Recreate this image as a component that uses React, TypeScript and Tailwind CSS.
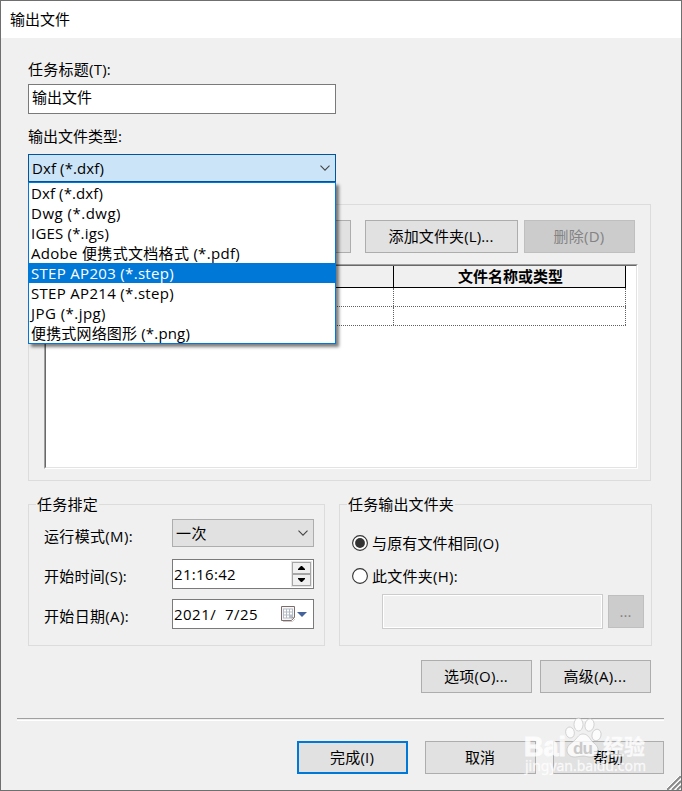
import React, { useState } from "react";
import clsx from "clsx";

const FILE_TYPES = [
  { label: "Dxf (*.dxf)", width: 72 },
  { label: "Dwg (*.dwg)", width: 90 },
  { label: "IGES (*.igs)", width: 78 },
  { label: "Adobe 便携式文档格式 (*.pdf)", width: 209 },
  { label: "STEP AP203 (*.step)", width: 143 },
  { label: "STEP AP214 (*.step)", width: 143 },
  { label: "JPG (*.jpg)", width: 75 },
  { label: "便携式网络图形 (*.png)", width: 159 },
];

interface FitTextProps {
  children: string;
  width: number;
}

const FitText: React.FC<FitTextProps> = ({ children, width }) => {
  const fit = (el: HTMLSpanElement | null) => {
    if (!el) return;
    el.style.letterSpacing = "0px";
    const natural = el.getBoundingClientRect().width;
    el.style.letterSpacing = `${(width - natural) / children.length}px`;
  };
  return (
    <span ref={fit} className="inline-block whitespace-pre">
      {children}
    </span>
  );
};

interface ButtonProps {
  label?: string;
  textWidth?: number;
  className?: string;
  disabled?: boolean;
  primary?: boolean;
}

const Button: React.FC<ButtonProps> = ({ label, textWidth = 0, className, disabled, primary }) => (
  <button
    disabled={disabled}
    className={clsx(
      "flex h-[33px] shrink-0 items-center justify-center pb-0.5 pr-px",
      primary && "border-2 border-[#0078d7] bg-[#e1e1e1]",
      disabled && "border border-[#bfbfbf] bg-[#cccccc] text-[#838383]",
      !primary && !disabled && "border border-[#adadad] bg-[#e1e1e1]",
      className ?? "w-[111px]"
    )}
  >
    {label && <FitText width={textWidth}>{label}</FitText>}
  </button>
);

const Chevron = () => (
  <svg width="10" height="6" viewBox="0 0 10 6" fill="none" stroke="#444" strokeWidth="1.1">
    <path d="M0.5 0.7 L5 5.2 L9.5 0.7" />
  </svg>
);

const CalendarIcon = () => (
  <svg width="15" height="17" viewBox="0 0 15 17">
    <path d="M2 15.5h9.5l2.500-2.500" stroke="#cfcaca" fill="none" />
    <path d="M0.500 0.500h13v11l-3 3h-10z" fill="#f7f7f7" stroke="#7c6c6c" />
    <path d="M2 2.500h10v8l-2 2h-8z" fill="#b4bcc6" />
    <path d="M3 3.500h2v2h-2zM6 3.500h2v2h-2zM9 3.500h2v2h-2zM3 6.500h2v2h-2zM6 6.500h2v2h-2zM9 6.500h2v2h-2zM3 9.500h2v2h-2zM6 9.500h2v2h-2z" fill="#fff" />
    <path d="M11 13.500v-2h2" fill="#fff" stroke="#7c6c6c" strokeWidth="0.600" />
  </svg>
);

const Spinner = () => (
  <div className="flex h-[26px] w-[21px] flex-col border border-[#e6e6e6] bg-[#a6a6a6] p-px">
    <div className="flex h-[10px] items-center justify-center bg-[#f0f0f0]">
      <svg width="7" height="4" viewBox="0 0 7 4">
        <path d="M3 0h1l3 3v1H0V3z" />
      </svg>
    </div>
    <div className="mt-0.5 flex flex-1 items-center justify-center bg-[#f0f0f0]">
      <svg width="7" height="4" viewBox="0 0 7 4">
        <path d="M0 0h7v1L4 4H3L0 1z" />
      </svg>
    </div>
  </div>
);

const Radio = ({ checked }: { checked: boolean }) => (
  <svg width="16" height="16" viewBox="0 0 16 16">
    <circle cx="8" cy="8" r="7.400" fill="#fff" stroke="#333" strokeWidth="1.100" />
    {checked && <circle cx="8" cy="8" r="4.900" fill="#333" />}
  </svg>
);

const Watermark = () => (
  <svg
    className="pointer-events-none absolute left-[519px] top-[713px]"
    width="130"
    height="64"
    viewBox="0 0 130 64"
    fill="#fff"
    stroke="#bcbcbc"
    strokeWidth="0.700"
    opacity="0.800"
  >
    <ellipse cx="50" cy="18.500" rx="4.300" ry="5.500" transform="rotate(-12 50 18.500)" />
    <ellipse cx="58.500" cy="10.500" rx="4.500" ry="6.500" />
    <ellipse cx="69.500" cy="11" rx="4.500" ry="6.300" transform="rotate(10 69.500 11)" />
    <ellipse cx="76.500" cy="21" rx="4.500" ry="5.800" transform="rotate(14 76.500 21)" />
    <path d="M63 20c4 0 6 3 8 6s7 5 7 10-4 7-8 7c-3 0-4-1-7-1s-5 1-8 1c-5 0-8-3-8-7 0-5 5-7 8-10s4-6 8-6z" />
    <g stroke="#fff">
      <text x="4" y="42" fontFamily="Liberation Sans" fontWeight="700" fontSize="27" textLength="42" lengthAdjust="spacingAndGlyphs" strokeWidth="1">
        Bai
      </text>
      <text x="83" y="40" fontFamily="Noto Sans CJK SC" fontWeight="700" fontSize="21" textLength="42" strokeWidth="0.300">
        经验
      </text>
      <text x="5" y="57" fontFamily="Noto Sans" fontSize="14" textLength="121" lengthAdjust="spacing" strokeWidth="0.300">
        jingyan.baidu.com
      </text>
    </g>
    <text x="53" y="39.500" fontFamily="Liberation Sans" fontWeight="700" fontSize="17" fill="#c4c4c4" stroke="none" textLength="20">
      du
    </text>
  </svg>
);

const App = () => {
  const [selected] = useState(4);
  const [sameFolder] = useState(true);

  return (
    <div className="relative flex h-[791px] w-[682px] flex-col border border-[#6f6f6f] bg-[#f0f0f0] font-['Open_Sans','Noto_Sans_CJK_SC',sans-serif] text-[15px] leading-5 text-black">
      <header className="flex h-[37px] items-center bg-white pb-0.5 pl-[9px]">
        <FitText width={60}>输出文件</FitText>
      </header>

      <main className="flex flex-col pl-[27px]">
        <label className="mt-[21px] h-5">
          <FitText width={83}>任务标题(T):</FitText>
        </label>
        <div className="mt-[5px] flex h-[30px] w-[308px] items-center border border-[#7a7a7a] bg-white pb-[5px] pl-[3px]">
          <FitText width={60}>输出文件</FitText>
        </div>
        <label className="mt-3 h-5">
          <FitText width={94}>输出文件类型:</FitText>
        </label>

        <div className="relative z-10 mt-2 w-[308px]">
          <div className="flex h-7 items-center justify-between border border-[#00559b] bg-[#cce4f7] pl-[3px] pr-[5px]">
            <FitText width={72}>Dxf (*.dxf)</FitText>
            <Chevron />
          </div>
          <ul className="absolute left-0 top-7 w-full border border-[#0078d7] bg-white shadow-[3px_3px_3px_rgba(0,0,0,0.5)]">
            {FILE_TYPES.map((type, index) => (
              <li
                key={type.label}
                className={clsx("h-5 pl-[2px]", index === selected && "bg-[#0078d7] text-white")}
              >
                <FitText width={type.width}>{type.label}</FitText>
              </li>
            ))}
          </ul>
        </div>

        {/* File list */}
        <section className="mt-[22px] h-[277px] w-[623px] border border-[#dcdcdc] px-[15px] pt-[15px]">
          <div className="flex">
            <Button className="mr-[14px] w-[307px]" />
            <Button label="添加文件夹(L)..." textWidth={105} className="mr-[6px] w-[153px]" />
            <Button label="删除(D)" textWidth={51} disabled />
          </div>
          <div className="mt-[11px] h-[205px] w-[594px] border border-b-white border-l-[#a0a0a0] border-r-white border-t-[#a0a0a0]">
            <div className="h-full border border-b-[#e3e3e3] border-l-[#696969] border-r-[#e3e3e3] border-t-[#696969] bg-white">
              <div className="flex h-[22px] w-[580px] border-b border-black bg-[#f0f0f0] font-bold">
                <div className="w-[348px] border-r border-black" />
                <div className="flex-1 border-r border-black pl-0.5 text-center">
                  <FitText width={105}>文件名称或类型</FitText>
                </div>
              </div>
              {[0, 1].map((row) => (
                <div key={row} className="flex h-[19px] w-[580px] border-b border-dotted border-[#606060]">
                  <div className="w-[348px] border-r border-dotted border-[#606060]" />
                  <div className="flex-1 border-r border-dotted border-[#606060]" />
                </div>
              ))}
            </div>
          </div>
        </section>

        <div className="mt-[13px] flex gap-[14px]">
          <fieldset className="h-[152px] w-[297px] border border-[#dcdcdc] pl-[7px]">
            <legend className="h-[21px] px-px">
              <FitText width={61}>任务排定</FitText>
            </legend>
            <div className="mt-1 flex flex-col pl-2">
              <div className="flex h-7">
                <label className="w-32 pt-[7px]">
                  <FitText width={89}>运行模式(M):</FitText>
                </label>
                <div className="flex w-[142px] items-center justify-between border border-[#adadad] bg-[#e1e1e1] pl-[3px] pr-[5px]">
                  <FitText width={31}>一次</FitText>
                  <Chevron />
                </div>
              </div>
              <div className="mt-3 flex h-[30px]">
                <label className="w-32 pt-[7px]">
                  <FitText width={83}>开始时间(S):</FitText>
                </label>
                <div className="flex w-[142px] items-center justify-between border border-[#7a7a7a] bg-white pl-px pr-px">
                  <FitText width={62}>21:16:42</FitText>
                  <Spinner />
                </div>
              </div>
              <div className="mt-[10px] flex h-[30px]">
                <label className="w-32 pt-[7px]">
                  <FitText width={85}>开始日期(A):</FitText>
                </label>
                <div className="flex w-[142px] items-center border border-[#7a7a7a] bg-white pl-px">
                  <FitText width={84}>{"2021/  7/25"}</FitText>
                  <div className="ml-[23px] flex items-center gap-[1px]">
                    <CalendarIcon />
                    <svg width="10" height="5" viewBox="0 0 10 5" fill="#45629b">
                      <path d="M0 0H10L5 5z" />
                    </svg>
                  </div>
                </div>
              </div>
            </div>
          </fieldset>

          <fieldset className="h-[152px] w-[313px] border border-[#dcdcdc] pl-[7px]">
            <legend className="h-[21px] px-px">
              <FitText width={106}>任务输出文件夹</FitText>
            </legend>
            <div className="flex flex-col pl-[5px]">
              <div className="mt-[18px] flex items-center gap-1">
                <Radio checked={sameFolder} />
                <FitText width={127}>与原有文件相同(O)</FitText>
              </div>
              <div className="mt-[13px] flex items-center gap-1">
                <Radio checked={!sameFolder} />
                <FitText width={86}>此文件夹(H):</FitText>
              </div>
              <div className="mt-2 flex items-center gap-[5px] pl-[30px]">
                <div className="h-[35px] w-[221px] border border-[#cccccc] bg-[#f0f0f0] shadow-[inset_0_0_0_1px_#fff]" />
                <Button label="..." textWidth={12} className="w-9" disabled />
              </div>
            </div>
          </fieldset>
        </div>

        <div className="ml-[393px] mt-[14px] flex gap-2">
          <Button label="选项(O)..." textWidth={64} />
          <Button label="高级(A)..." textWidth={63} />
        </div>
      </main>

      <hr className="ml-4 mt-[25px] h-[3px] w-[647px] border-b border-t border-b-white border-t-[#a0a0a0]" />
      <footer className="ml-[296px] mt-5 flex gap-[17px]">
        <Button label="完成(I)" textWidth={44} primary />
        <Button label="取消" textWidth={30} />
        <Button label="帮助" textWidth={30} />
      </footer>

      <Watermark />
      <svg className="absolute bottom-0 right-0" width="14" height="14" viewBox="0 0 14 14">
        <path d="M0 14L14 0M5 14L14 5M10 14L14 10" stroke="#8a8a8a" strokeWidth="2" />
        <path d="M-2 14L14 -2M3 14L14 3M8 14L14 8" stroke="#fff" strokeWidth="1" />
      </svg>
    </div>
  );
};

export default App;
